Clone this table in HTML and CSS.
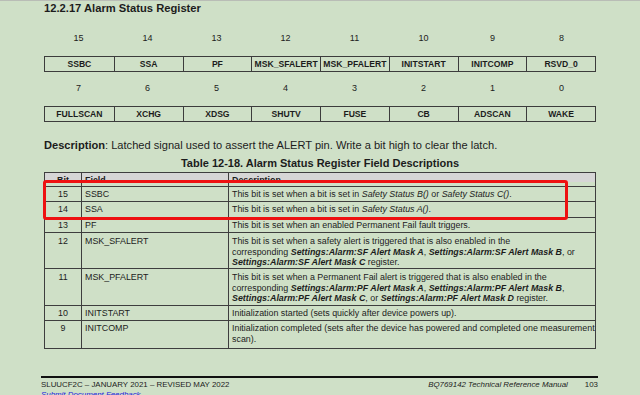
FILE: index.html
```html
<!DOCTYPE html>
<html>
<head>
<meta charset="utf-8">
<link rel="stylesheet" href="styles.css">
</head>
<body>
<div class="page">
  <h1 class="title">12.2.17 Alarm Status Register</h1>

  <div class="reg">
    <div class="bits"><span>15</span><span>14</span><span>13</span><span>12</span><span>11</span><span>10</span><span>9</span><span>8</span></div>
    <div class="fields"><span>SSBC</span><span>SSA</span><span>PF</span><span>MSK_SFALERT</span><span>MSK_PFALERT</span><span>INITSTART</span><span>INITCOMP</span><span>RSVD_0</span></div>
    <div class="bits"><span>7</span><span>6</span><span>5</span><span>4</span><span>3</span><span>2</span><span>1</span><span>0</span></div>
    <div class="fields"><span>FULLSCAN</span><span>XCHG</span><span>XDSG</span><span>SHUTV</span><span>FUSE</span><span>CB</span><span>ADSCAN</span><span>WAKE</span></div>
  </div>

  <p class="desc"><b>Description</b>: Latched signal used to assert the ALERT pin. Write a bit high to clear the latch.</p>

  <div class="caption">Table 12-18. Alarm Status Register Field Descriptions</div>

  <div class="tablewrap">
    <table class="ft">
      <tr class="head"><th class="c-bit"><div class="clip">Bit</div></th><th class="c-field"><div class="clip">Field</div></th><th><div class="clip">Description</div></th></tr>
      <tr class="spacer"><td></td><td></td><td></td></tr>
      <tr class="r1"><td class="c-bit">15</td><td>SSBC</td><td>This bit is set when a bit is set in <i>Safety Status B()</i> or <i>Safety Status C()</i>.</td></tr>
      <tr class="r1b"><td class="c-bit">14</td><td>SSA</td><td>This bit is set when a bit is set in <i>Safety Status A()</i>.</td></tr>
      <tr class="r1"><td class="c-bit">13</td><td>PF</td><td>This bit is set when an enabled Permanent Fail fault triggers.</td></tr>
      <tr class="r3"><td class="c-bit">12</td><td>MSK_SFALERT</td><td class="nw">This bit is set when a safety alert is triggered that is also enabled in the<br>corresponding <b><i>Settings:Alarm:SF Alert Mask A</i></b>, <b><i>Settings:Alarm:SF Alert Mask B</i></b>, or<br><b><i>Settings:Alarm:SF Alert Mask C</i></b> register.</td></tr>
      <tr class="r3b"><td class="c-bit">11</td><td>MSK_PFALERT</td><td class="nw">This bit is set when a Permanent Fail alert is triggered that is also enabled in the<br>corresponding <b><i>Settings:Alarm:PF Alert Mask A</i></b>, <b><i>Settings:Alarm:PF Alert Mask B</i></b>,<br><b><i>Settings:Alarm:PF Alert Mask C</i></b>, or <b><i>Settings:Alarm:PF Alert Mask D</i></b> register.</td></tr>
      <tr class="r1"><td class="c-bit">10</td><td>INITSTART</td><td>Initialization started (sets quickly after device powers up).</td></tr>
      <tr class="r2"><td class="c-bit">9</td><td>INITCOMP</td><td class="nw">Initialization completed (sets after the device has powered and completed one measurement<br>scan).</td></tr>
    </table>
    <div class="highlight"></div>
  </div>

  <footer class="foot">
    <div class="foot-row">
      <div class="foot-left">
        <div>SLUUCF2C – JANUARY 2021 – REVISED MAY 2022</div>
        <a class="feedback" href="#">Submit Document Feedback</a>
      </div>
      <div class="foot-right"><i>BQ769142 Technical Reference Manual</i><span class="pg">103</span></div>
    </div>
  </footer>
</div>
</body>
</html>
```

FILE: styles.css
```css
html, body {
  margin: 0;
  padding: 0;
  background: #cfe0c7;
  height: 395px;
  overflow: hidden;
}
body {
  border-top: 1px solid #b9bdb6;
  box-sizing: border-box;
  font-family: "Liberation Sans", Arial, sans-serif;
  color: #1c1c1c;
}
.page {
  width: 552px;
  padding-left: 44px;
}
.title {
  margin: 0;
  font-size: 11.2px;
  font-weight: bold;
  line-height: 15px;
  height: 15px;
}
.reg {
  display: flex;
  flex-direction: column;
  margin-top: 13px;
}
.bits {
  display: grid;
  grid-template-columns: repeat(8, 1fr);
  height: 18px;
  line-height: 18px;
  font-size: 9px;
  text-align: center;
}
.fields {
  display: grid;
  grid-template-columns: repeat(8, 1fr);
  border: 1px solid #3c3c3c;
  height: 14px;
  margin: 9px 0 7px;
  font-size: 8.6px;
  font-weight: bold;
  line-height: 14px;
  text-align: center;
}
.fields span {
  border-left: 1px solid #3c3c3c;
  white-space: nowrap;
  overflow: hidden;
}
.fields span:first-child { border-left: none; }
.desc {
  margin: 9px 0 0;
  font-size: 11.1px;
  line-height: 14px;
  height: 14px;
}
.caption {
  text-align: center;
  font-weight: bold;
  font-size: 11px;
  line-height: 14px;
  margin-top: 4px;
}
.tablewrap {
  position: relative;
  margin-top: 2px;
}
.ft {
  width: 552px;
  border-collapse: collapse;
  font-size: 8.9px;
  table-layout: fixed;
}
.ft td, .ft th {
  border: 1px solid #3e3e3e;
  padding: 2px 3px 0;
  vertical-align: top;
  text-align: left;
  line-height: 10.5px;
}
.ft td.nw { white-space: nowrap; padding-right: 0; }
.ft .c-bit { width: 30px; text-align: center; }
.ft .c-field { width: 140px; }
.ft tr.head th {
  background: #d6d6d6;
  height: 9px;
  padding: 0 3px;
  border-bottom: none;
}
.clip {
  height: 9px;
  overflow: hidden;
  line-height: 15px;
  font-weight: bold;
  font-size: 8.9px;
}
.ft tr.head th:first-child .clip { text-align: center; }
.ft tr.spacer td {
  height: 4px;
  padding: 0;
  border-top: none;
}
.ft tr.r1 { height: 15px; }
.ft tr.r1b { height: 16px; }
.ft tr.r3 { height: 36px; }
.ft tr.r3b { height: 37px; }
.ft tr.r2 { height: 28px; }
.ft tr.r3 td, .ft tr.r3b td { padding-top: 3px; }
.highlight {
  position: absolute;
  left: -1px;
  top: 8px;
  width: 519px;
  height: 34px;
  border: 3px solid #ee1111;
  border-radius: 3px;
}
.foot {
  margin-top: 27px;
  margin-left: -3px;
  width: 557px;
  border-top: 2px solid #111;
}
.foot-row {
  display: flex;
  justify-content: space-between;
  padding-top: 2px;
  font-size: 7.9px;
  line-height: 10px;
}
.feedback {
  color: #2222dd;
  font-style: italic;
}
.pg { margin-left: 17px; }
```
